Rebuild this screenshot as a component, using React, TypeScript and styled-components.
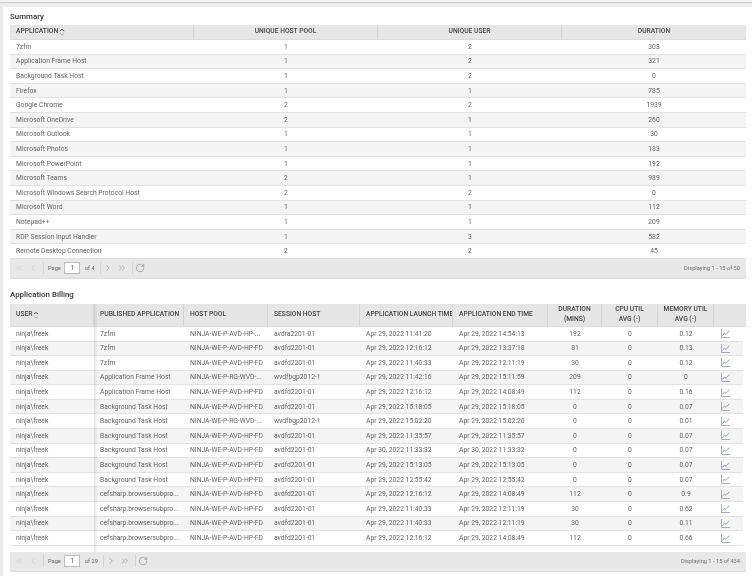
import React from 'react';
import styled, { createGlobalStyle } from 'styled-components';
import { ChevronLeft, ChevronRight, ChevronsLeft, ChevronsRight, RotateCw } from 'lucide-react';

const GlobalStyle = createGlobalStyle`
  html, body { margin: 0; padding: 0; background: #ececec; }
  body { font-family: Roboto, "Liberation Sans", sans-serif; font-size: 6.75px; color: #646464; overflow: hidden; }
`;

const Page = styled.div`
  width: 752px;
  height: 576px;
  overflow: hidden;
  filter: blur(0.3px);
`;

const TopBand = styled.div`
  height: 7px;
  box-sizing: border-box;
  border-top: 2px solid #f4f4f4;
  background: linear-gradient(#c9c9c9 0, #c9c9c9 1px, #ececec 1px);
`;

const Panel = styled.div`
  margin-left: 3px;
  height: 569px;
  background: #fff;
  padding: 0 6px 0 7px;
  box-sizing: border-box;
`;

const Title = styled.h2<{ $top: number; $height: number }>`
  margin: 0;
  padding-top: ${(p) => p.$top}px;
  height: ${(p) => p.$height}px;
  box-sizing: border-box;
  font-size: 7.9px;
  line-height: 10px;
  font-weight: 500;
  color: #333;
`;

const Grid = styled.div<{ $cols: string; $height: number; $alt?: boolean; $inset?: boolean }>`
  display: grid;
  grid-template-columns: ${(p) => p.$cols};
  height: ${(p) => p.$height}px;
  box-sizing: border-box;
`;

const HeadRow = styled(Grid)`
  background: #e6e6e6;
  border-bottom: 1px solid #dcdcdc;
`;

const HeadCell = styled.div<{ $center?: boolean }>`
  display: flex;
  align-items: center;
  justify-content: ${(p) => (p.$center ? 'center' : 'flex-start')};
  text-align: ${(p) => (p.$center ? 'center' : 'left')};
  padding: 0 0 0 ${(p) => (p.$center ? 0 : 6)}px;
  border-right: 1px solid #d6d6d6;
  font-size: 6.7px;
  font-weight: 500;
  line-height: 9.5px;
  color: #444;
  white-space: nowrap;
  overflow: hidden;
  &:last-child { border-right: 0; }
`;

const Row = styled(Grid)`
  background: ${(p) => (p.$alt ? '#f4f4f4' : '#fff')};
  border-bottom: 1px solid #e2e2e2;
  ${(p) => p.$inset && 'margin-right: 3px;'}
`;

const Cell = styled.div<{ $center?: boolean }>`
  display: flex;
  align-items: center;
  justify-content: ${(p) => (p.$center ? 'center' : 'flex-start')};
  padding-left: ${(p) => (p.$center ? 0 : 6)}px;
  white-space: nowrap;
  overflow: hidden;
`;

const ChartCell = styled(Cell)`
  padding-right: 7px;
`;

const LockedTable = styled.div`
  position: relative;
  &::after {
    content: '';
    position: absolute;
    top: 0;
    bottom: 0;
    left: 84px;
    width: 4px;
    background: linear-gradient(to right, rgba(0, 0, 0, .1), rgba(0, 0, 0, 0));
  }
`;

const Filler = styled.div`
  height: 6px;
`;

const Pager = styled.div<{ $height: number }>`
  display: flex;
  align-items: center;
  height: ${(p) => p.$height}px;
  box-sizing: border-box;
  background: #e8e8e8;
  border-bottom: 1px solid #dcdcdc;
  padding: 0 6px 0 2px;
  font-size: 5.7px;
  color: #666;
`;

const IconSlot = styled.span<{ $off?: boolean }>`
  display: flex;
  justify-content: center;
  width: 14px;
  color: ${(p) => (p.$off ? '#bcbcbc' : '#7c7c7c')};
`;

const Divider = styled.span`
  width: 1px;
  height: 12px;
  margin-left: 3px;
  background: #d4d4d4;
`;

const PageLabel = styled.span`
  margin-left: 4px;
`;

const PageCount = styled.span`
  margin-right: 2px;
`;

const PageInput = styled.span`
  display: flex;
  align-items: center;
  justify-content: center;
  width: 16px;
  height: 12px;
  margin: 0 4.5px 0 3.5px;
  box-sizing: border-box;
  background: #fff;
  border: 1px solid #bdbdbd;
  color: #555;
  font-size: 6.5px;
`;

const Displaying = styled.span`
  margin-left: auto;
  color: #707070;
`;

const SortMark = styled.svg`
  margin-left: 1px;
  flex: none;
`;

const Sort = () => (
  <SortMark width="6" height="8" viewBox="0 0 6 8" fill="none">
    <path d="M1 3.2 3 1.2 5 3.2" stroke="#444" strokeWidth="1" />
    <path d="M1 5.4 3 7 5 5.4" stroke="#aaa" strokeWidth="1" />
  </SortMark>
);

const ChartIcon = () => (
  <svg width="9" height="9" viewBox="0 0 9 9" fill="none">
    <path d="M.5 0v8.5H9" stroke="#8d9db5" strokeWidth=".8" />
    <path d="M1.5 6.5 3.4 4l1.6 1.4L8.4 1.6" stroke="#7f93b2" strokeWidth=".8" />
  </svg>
);

const summaryCols = '184fr 184fr 184fr 184fr';
const billingCols = '84px 90px 84px 92px 93px 95px 54px 56px 56px 1fr';

const summary: [string, number, number, number][] = [
  ['7zfm', 1, 2, 303],
  ['Application Frame Host', 1, 2, 321],
  ['Background Task Host', 1, 2, 0],
  ['Firefox', 1, 1, 785],
  ['Google Chrome', 2, 2, 1939],
  ['Microsoft OneDrive', 2, 1, 260],
  ['Microsoft Outlook', 1, 1, 30],
  ['Microsoft Photos', 1, 1, 183],
  ['Microsoft PowerPoint', 1, 1, 192],
  ['Microsoft Teams', 2, 1, 989],
  ['Microsoft Windows Search Protocol Host', 2, 2, 0],
  ['Microsoft Word', 1, 1, 112],
  ['Notepad++', 1, 1, 209],
  ['RDP Session Input Handler', 1, 3, 582],
  ['Remote Desktop Connection', 2, 2, 45],
];

const FD = 'NINJA-WE-P-AVD-HP-FD';
const RG = 'NINJA-WE-P-RG-WVD-...';
const AF = 'Application Frame Host';
const BT = 'Background Task Host';
const CS = 'cefsharp.browsersubpro...';
const AV = 'avdfd2201-01';
const WV = 'wvdfbgp2012-1';

const billing: string[][] = [
  ['7zfm', 'NINJA-WE-P-AVD-HP-...', 'avdra2201-01', 'Apr 29, 2022 11:41:20', 'Apr 29, 2022 14:54:13', '192', '0.12'],
  ['7zfm', FD, AV, 'Apr 29, 2022 12:16:12', 'Apr 29, 2022 13:37:18', '81', '0.13'],
  ['7zfm', FD, AV, 'Apr 29, 2022 11:40:33', 'Apr 29, 2022 12:11:19', '30', '0.12'],
  [AF, RG, WV, 'Apr 29, 2022 11:42:16', 'Apr 29, 2022 15:11:59', '209', '0'],
  [AF, FD, AV, 'Apr 29, 2022 12:16:12', 'Apr 29, 2022 14:08:49', '112', '0.16'],
  [BT, FD, AV, 'Apr 29, 2022 15:18:05', 'Apr 29, 2022 15:18:05', '0', '0.07'],
  [BT, RG, WV, 'Apr 29, 2022 15:02:20', 'Apr 29, 2022 15:02:20', '0', '0.01'],
  [BT, FD, AV, 'Apr 29, 2022 11:35:57', 'Apr 29, 2022 11:35:57', '0', '0.07'],
  [BT, FD, AV, 'Apr 30, 2022 11:33:32', 'Apr 30, 2022 11:33:32', '0', '0.07'],
  [BT, FD, AV, 'Apr 29, 2022 15:13:05', 'Apr 29, 2022 15:13:05', '0', '0.07'],
  [BT, FD, AV, 'Apr 29, 2022 12:55:42', 'Apr 29, 2022 12:55:42', '0', '0.07'],
  [CS, FD, AV, 'Apr 29, 2022 12:16:12', 'Apr 29, 2022 14:08:49', '112', '0.9'],
  [CS, FD, AV, 'Apr 29, 2022 11:40:33', 'Apr 29, 2022 12:11:19', '30', '0.62'],
  [CS, FD, AV, 'Apr 29, 2022 11:40:33', 'Apr 29, 2022 12:11:19', '30', '0.11'],
  [CS, FD, AV, 'Apr 29, 2022 12:16:12', 'Apr 29, 2022 14:08:49', '112', '0.66'],
];

const Toolbar = ({ pages, text }: { pages: number; text: string }) => (
  <Pager $height={20}>
    <IconSlot $off><ChevronsLeft size={10} strokeWidth={1.3} /></IconSlot>
    <IconSlot $off><ChevronLeft size={10} strokeWidth={1.3} /></IconSlot>
    <Divider />
    <PageLabel>Page</PageLabel>
    <PageInput>1</PageInput>
    <PageCount>of {pages}</PageCount>
    <Divider />
    <IconSlot><ChevronRight size={10} strokeWidth={1.3} /></IconSlot>
    <IconSlot><ChevronsRight size={10} strokeWidth={1.3} /></IconSlot>
    <Divider />
    <IconSlot><RotateCw size={10} strokeWidth={1.3} /></IconSlot>
    <Displaying>{text}</Displaying>
  </Pager>
);

export default function App() {
  return (
    <Page>
      <GlobalStyle />
      <TopBand />
      <Panel>
        <Title $top={4.5} $height={18}>Summary</Title>
        <HeadRow $cols={summaryCols} $height={15}>
          <HeadCell>APPLICATION<Sort /></HeadCell>
          <HeadCell $center>UNIQUE HOST POOL</HeadCell>
          <HeadCell $center>UNIQUE USER</HeadCell>
          <HeadCell $center>DURATION</HeadCell>
        </HeadRow>
        {summary.map((r, i) => (
          <Row key={r[0]} $cols={summaryCols} $height={14.6} $alt={i % 2 === 1}>
            <Cell>{r[0]}</Cell>
            <Cell $center>{r[1]}</Cell>
            <Cell $center>{r[2]}</Cell>
            <Cell $center>{r[3]}</Cell>
          </Row>
        ))}
        <Toolbar pages={4} text="Displaying 1 - 15 of 50" />

        <Title $top={11} $height={25}>Application Billing</Title>
        <LockedTable>
          <HeadRow $cols={billingCols} $height={23}>
            <HeadCell>USER<Sort /></HeadCell>
            <HeadCell>PUBLISHED APPLICATION</HeadCell>
            <HeadCell>HOST POOL</HeadCell>
            <HeadCell>SESSION HOST</HeadCell>
            <HeadCell>APPLICATION LAUNCH TIME</HeadCell>
            <HeadCell>APPLICATION END TIME</HeadCell>
            <HeadCell $center>DURATION<br />(MINS)</HeadCell>
            <HeadCell $center>CPU UTIL<br />AVG (-)</HeadCell>
            <HeadCell $center>MEMORY UTIL<br />AVG (-)</HeadCell>
            <HeadCell />
          </HeadRow>
          {billing.map((r, i) => (
            <Row key={i} $cols={billingCols} $height={14.6} $alt={i % 2 === 1} $inset>
              <Cell>ninja\freek</Cell>
              <Cell>{r[0]}</Cell>
              <Cell>{r[1]}</Cell>
              <Cell>{r[2]}</Cell>
              <Cell>{r[3]}</Cell>
              <Cell>{r[4]}</Cell>
              <Cell $center>{r[5]}</Cell>
              <Cell $center>0</Cell>
              <Cell $center>{r[6]}</Cell>
              <ChartCell $center><ChartIcon /></ChartCell>
            </Row>
          ))}
          <Filler />
        </LockedTable>
        <Toolbar pages={29} text="Displaying 1 - 15 of 434" />
      </Panel>
    </Page>
  );
}
